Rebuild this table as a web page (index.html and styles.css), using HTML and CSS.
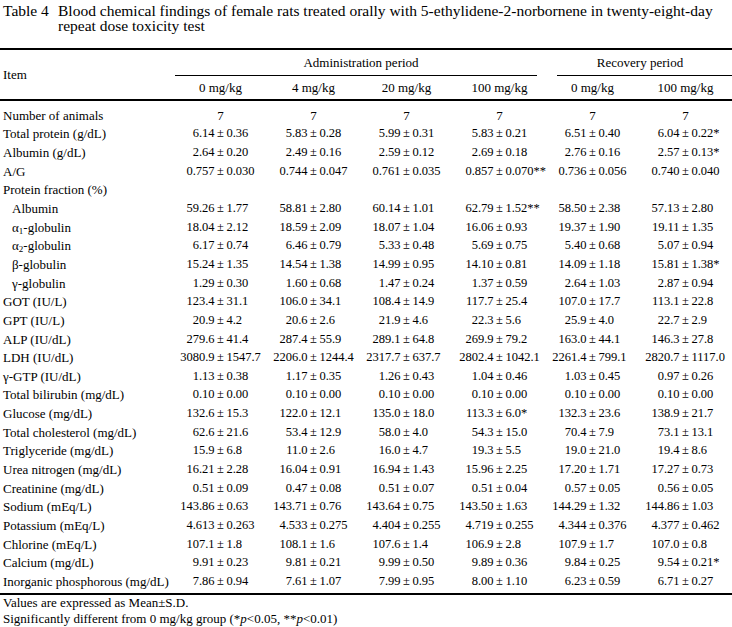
FILE: index.html
```html
<!DOCTYPE html>
<html lang="en">
<head>
<meta charset="utf-8">
<title>Table 4</title>
<link rel="stylesheet" href="styles.css">
</head>
<body>
<div class="page">
  <div class="caption">
    <span class="label">Table 4</span>
    <span class="title">Blood chemical findings of female rats treated orally with 5-ethylidene-2-norbornene in twenty-eight-day repeat dose toxicity test</span>
  </div>

  <div class="table">
    <div class="head">
      <div class="item">Item</div>
      <div class="group admin">Administration period</div>
      <div class="group recovery">Recovery period</div>
      <div class="dose">0 mg/kg</div>
      <div class="dose">4 mg/kg</div>
      <div class="dose">20 mg/kg</div>
      <div class="dose">100 mg/kg</div>
      <div class="dose">0 mg/kg</div>
      <div class="dose">100 mg/kg</div>
    </div>

    <div class="body">
      <div class="row"><div class="lbl">Number of animals</div><div class="n">7</div><div class="n">7</div><div class="n">7</div><div class="n">7</div><div class="n">7</div><div class="n">7</div></div>
      <div class="row"><div class="lbl">Total protein (g/dL)</div><div class="v"><span>6.14</span><span class="pm">±</span><span>0.36</span></div><div class="v"><span>5.83</span><span class="pm">±</span><span>0.28</span></div><div class="v"><span>5.99</span><span class="pm">±</span><span>0.31</span></div><div class="v"><span>5.83</span><span class="pm">±</span><span>0.21</span></div><div class="v"><span>6.51</span><span class="pm">±</span><span>0.40</span></div><div class="v"><span>6.04</span><span class="pm">±</span><span>0.22*</span></div></div>
      <div class="row"><div class="lbl">Albumin (g/dL)</div><div class="v"><span>2.64</span><span class="pm">±</span><span>0.20</span></div><div class="v"><span>2.49</span><span class="pm">±</span><span>0.16</span></div><div class="v"><span>2.59</span><span class="pm">±</span><span>0.12</span></div><div class="v"><span>2.69</span><span class="pm">±</span><span>0.18</span></div><div class="v"><span>2.76</span><span class="pm">±</span><span>0.16</span></div><div class="v"><span>2.57</span><span class="pm">±</span><span>0.13*</span></div></div>
      <div class="row"><div class="lbl">A/G</div><div class="v"><span>0.757</span><span class="pm">±</span><span>0.030</span></div><div class="v"><span>0.744</span><span class="pm">±</span><span>0.047</span></div><div class="v"><span>0.761</span><span class="pm">±</span><span>0.035</span></div><div class="v"><span>0.857</span><span class="pm">±</span><span>0.070**</span></div><div class="v"><span>0.736</span><span class="pm">±</span><span>0.056</span></div><div class="v"><span>0.740</span><span class="pm">±</span><span>0.040</span></div></div>
      <div class="row"><div class="lbl">Protein fraction (%)</div></div>
      <div class="row"><div class="lbl sub">Albumin</div><div class="v"><span>59.26</span><span class="pm">±</span><span>1.77</span></div><div class="v"><span>58.81</span><span class="pm">±</span><span>2.80</span></div><div class="v"><span>60.14</span><span class="pm">±</span><span>1.01</span></div><div class="v"><span>62.79</span><span class="pm">±</span><span>1.52**</span></div><div class="v"><span>58.50</span><span class="pm">±</span><span>2.38</span></div><div class="v"><span>57.13</span><span class="pm">±</span><span>2.80</span></div></div>
      <div class="row"><div class="lbl sub">α<sub>1</sub>-globulin</div><div class="v"><span>18.04</span><span class="pm">±</span><span>2.12</span></div><div class="v"><span>18.59</span><span class="pm">±</span><span>2.09</span></div><div class="v"><span>18.07</span><span class="pm">±</span><span>1.04</span></div><div class="v"><span>16.06</span><span class="pm">±</span><span>0.93</span></div><div class="v"><span>19.37</span><span class="pm">±</span><span>1.90</span></div><div class="v"><span>19.11</span><span class="pm">±</span><span>1.35</span></div></div>
      <div class="row"><div class="lbl sub">α<sub>2</sub>-globulin</div><div class="v"><span>6.17</span><span class="pm">±</span><span>0.74</span></div><div class="v"><span>6.46</span><span class="pm">±</span><span>0.79</span></div><div class="v"><span>5.33</span><span class="pm">±</span><span>0.48</span></div><div class="v"><span>5.69</span><span class="pm">±</span><span>0.75</span></div><div class="v"><span>5.40</span><span class="pm">±</span><span>0.68</span></div><div class="v"><span>5.07</span><span class="pm">±</span><span>0.94</span></div></div>
      <div class="row"><div class="lbl sub">β-globulin</div><div class="v"><span>15.24</span><span class="pm">±</span><span>1.35</span></div><div class="v"><span>14.54</span><span class="pm">±</span><span>1.38</span></div><div class="v"><span>14.99</span><span class="pm">±</span><span>0.95</span></div><div class="v"><span>14.10</span><span class="pm">±</span><span>0.81</span></div><div class="v"><span>14.09</span><span class="pm">±</span><span>1.18</span></div><div class="v"><span>15.81</span><span class="pm">±</span><span>1.38*</span></div></div>
      <div class="row"><div class="lbl sub">γ-globulin</div><div class="v"><span>1.29</span><span class="pm">±</span><span>0.30</span></div><div class="v"><span>1.60</span><span class="pm">±</span><span>0.68</span></div><div class="v"><span>1.47</span><span class="pm">±</span><span>0.24</span></div><div class="v"><span>1.37</span><span class="pm">±</span><span>0.59</span></div><div class="v"><span>2.64</span><span class="pm">±</span><span>1.03</span></div><div class="v"><span>2.87</span><span class="pm">±</span><span>0.94</span></div></div>
      <div class="row"><div class="lbl">GOT (IU/L)</div><div class="v"><span>123.4</span><span class="pm">±</span><span>31.1</span></div><div class="v"><span>106.0</span><span class="pm">±</span><span>34.1</span></div><div class="v"><span>108.4</span><span class="pm">±</span><span>14.9</span></div><div class="v"><span>117.7</span><span class="pm">±</span><span>25.4</span></div><div class="v"><span>107.0</span><span class="pm">±</span><span>17.7</span></div><div class="v"><span>113.1</span><span class="pm">±</span><span>22.8</span></div></div>
      <div class="row"><div class="lbl">GPT (IU/L)</div><div class="v"><span>20.9</span><span class="pm">±</span><span>4.2</span></div><div class="v"><span>20.6</span><span class="pm">±</span><span>2.6</span></div><div class="v"><span>21.9</span><span class="pm">±</span><span>4.6</span></div><div class="v"><span>22.3</span><span class="pm">±</span><span>5.6</span></div><div class="v"><span>25.9</span><span class="pm">±</span><span>4.0</span></div><div class="v"><span>22.7</span><span class="pm">±</span><span>2.9</span></div></div>
      <div class="row"><div class="lbl">ALP (IU/dL)</div><div class="v"><span>279.6</span><span class="pm">±</span><span>41.4</span></div><div class="v"><span>287.4</span><span class="pm">±</span><span>55.9</span></div><div class="v"><span>289.1</span><span class="pm">±</span><span>64.8</span></div><div class="v"><span>269.9</span><span class="pm">±</span><span>79.2</span></div><div class="v"><span>163.0</span><span class="pm">±</span><span>44.1</span></div><div class="v"><span>146.3</span><span class="pm">±</span><span>27.8</span></div></div>
      <div class="row"><div class="lbl">LDH (IU/dL)</div><div class="v"><span>3080.9</span><span class="pm">±</span><span>1547.7</span></div><div class="v"><span>2206.0</span><span class="pm">±</span><span>1244.4</span></div><div class="v"><span>2317.7</span><span class="pm">±</span><span>637.7</span></div><div class="v"><span>2802.4</span><span class="pm">±</span><span>1042.1</span></div><div class="v"><span>2261.4</span><span class="pm">±</span><span>799.1</span></div><div class="v"><span>2820.7</span><span class="pm">±</span><span>1117.0</span></div></div>
      <div class="row"><div class="lbl">γ-GTP (IU/dL)</div><div class="v"><span>1.13</span><span class="pm">±</span><span>0.38</span></div><div class="v"><span>1.17</span><span class="pm">±</span><span>0.35</span></div><div class="v"><span>1.26</span><span class="pm">±</span><span>0.43</span></div><div class="v"><span>1.04</span><span class="pm">±</span><span>0.46</span></div><div class="v"><span>1.03</span><span class="pm">±</span><span>0.45</span></div><div class="v"><span>0.97</span><span class="pm">±</span><span>0.26</span></div></div>
      <div class="row"><div class="lbl">Total bilirubin (mg/dL)</div><div class="v"><span>0.10</span><span class="pm">±</span><span>0.00</span></div><div class="v"><span>0.10</span><span class="pm">±</span><span>0.00</span></div><div class="v"><span>0.10</span><span class="pm">±</span><span>0.00</span></div><div class="v"><span>0.10</span><span class="pm">±</span><span>0.00</span></div><div class="v"><span>0.10</span><span class="pm">±</span><span>0.00</span></div><div class="v"><span>0.10</span><span class="pm">±</span><span>0.00</span></div></div>
      <div class="row"><div class="lbl">Glucose (mg/dL)</div><div class="v"><span>132.6</span><span class="pm">±</span><span>15.3</span></div><div class="v"><span>122.0</span><span class="pm">±</span><span>12.1</span></div><div class="v"><span>135.0</span><span class="pm">±</span><span>18.0</span></div><div class="v"><span>113.3</span><span class="pm">±</span><span>6.0*</span></div><div class="v"><span>132.3</span><span class="pm">±</span><span>23.6</span></div><div class="v"><span>138.9</span><span class="pm">±</span><span>21.7</span></div></div>
      <div class="row"><div class="lbl">Total cholesterol (mg/dL)</div><div class="v"><span>62.6</span><span class="pm">±</span><span>21.6</span></div><div class="v"><span>53.4</span><span class="pm">±</span><span>12.9</span></div><div class="v"><span>58.0</span><span class="pm">±</span><span>4.0</span></div><div class="v"><span>54.3</span><span class="pm">±</span><span>15.0</span></div><div class="v"><span>70.4</span><span class="pm">±</span><span>7.9</span></div><div class="v"><span>73.1</span><span class="pm">±</span><span>13.1</span></div></div>
      <div class="row"><div class="lbl">Triglyceride (mg/dL)</div><div class="v"><span>15.9</span><span class="pm">±</span><span>6.8</span></div><div class="v"><span>11.0</span><span class="pm">±</span><span>2.6</span></div><div class="v"><span>16.0</span><span class="pm">±</span><span>4.7</span></div><div class="v"><span>19.3</span><span class="pm">±</span><span>5.5</span></div><div class="v"><span>19.0</span><span class="pm">±</span><span>21.0</span></div><div class="v"><span>19.4</span><span class="pm">±</span><span>8.6</span></div></div>
      <div class="row"><div class="lbl">Urea nitrogen (mg/dL)</div><div class="v"><span>16.21</span><span class="pm">±</span><span>2.28</span></div><div class="v"><span>16.04</span><span class="pm">±</span><span>0.91</span></div><div class="v"><span>16.94</span><span class="pm">±</span><span>1.43</span></div><div class="v"><span>15.96</span><span class="pm">±</span><span>2.25</span></div><div class="v"><span>17.20</span><span class="pm">±</span><span>1.71</span></div><div class="v"><span>17.27</span><span class="pm">±</span><span>0.73</span></div></div>
      <div class="row"><div class="lbl">Creatinine (mg/dL)</div><div class="v"><span>0.51</span><span class="pm">±</span><span>0.09</span></div><div class="v"><span>0.47</span><span class="pm">±</span><span>0.08</span></div><div class="v"><span>0.51</span><span class="pm">±</span><span>0.07</span></div><div class="v"><span>0.51</span><span class="pm">±</span><span>0.04</span></div><div class="v"><span>0.57</span><span class="pm">±</span><span>0.05</span></div><div class="v"><span>0.56</span><span class="pm">±</span><span>0.05</span></div></div>
      <div class="row"><div class="lbl">Sodium (mEq/L)</div><div class="v"><span>143.86</span><span class="pm">±</span><span>0.63</span></div><div class="v"><span>143.71</span><span class="pm">±</span><span>0.76</span></div><div class="v"><span>143.64</span><span class="pm">±</span><span>0.75</span></div><div class="v"><span>143.50</span><span class="pm">±</span><span>1.63</span></div><div class="v"><span>144.29</span><span class="pm">±</span><span>1.32</span></div><div class="v"><span>144.86</span><span class="pm">±</span><span>1.03</span></div></div>
      <div class="row"><div class="lbl">Potassium (mEq/L)</div><div class="v"><span>4.613</span><span class="pm">±</span><span>0.263</span></div><div class="v"><span>4.533</span><span class="pm">±</span><span>0.275</span></div><div class="v"><span>4.404</span><span class="pm">±</span><span>0.255</span></div><div class="v"><span>4.719</span><span class="pm">±</span><span>0.255</span></div><div class="v"><span>4.344</span><span class="pm">±</span><span>0.376</span></div><div class="v"><span>4.377</span><span class="pm">±</span><span>0.462</span></div></div>
      <div class="row"><div class="lbl">Chlorine (mEq/L)</div><div class="v"><span>107.1</span><span class="pm">±</span><span>1.8</span></div><div class="v"><span>108.1</span><span class="pm">±</span><span>1.6</span></div><div class="v"><span>107.6</span><span class="pm">±</span><span>1.4</span></div><div class="v"><span>106.9</span><span class="pm">±</span><span>2.8</span></div><div class="v"><span>107.9</span><span class="pm">±</span><span>1.7</span></div><div class="v"><span>107.0</span><span class="pm">±</span><span>0.8</span></div></div>
      <div class="row"><div class="lbl">Calcium (mg/dL)</div><div class="v"><span>9.91</span><span class="pm">±</span><span>0.23</span></div><div class="v"><span>9.81</span><span class="pm">±</span><span>0.21</span></div><div class="v"><span>9.99</span><span class="pm">±</span><span>0.50</span></div><div class="v"><span>9.89</span><span class="pm">±</span><span>0.36</span></div><div class="v"><span>9.84</span><span class="pm">±</span><span>0.25</span></div><div class="v"><span>9.54</span><span class="pm">±</span><span>0.21*</span></div></div>
      <div class="row"><div class="lbl">Inorganic phosphorous (mg/dL)</div><div class="v"><span>7.86</span><span class="pm">±</span><span>0.94</span></div><div class="v"><span>7.61</span><span class="pm">±</span><span>1.07</span></div><div class="v"><span>7.99</span><span class="pm">±</span><span>0.95</span></div><div class="v"><span>8.00</span><span class="pm">±</span><span>1.10</span></div><div class="v"><span>6.23</span><span class="pm">±</span><span>0.59</span></div><div class="v"><span>6.71</span><span class="pm">±</span><span>0.27</span></div></div>
    </div>
  </div>

  <div class="notes">
    <p>Values are expressed as Mean±S.D.</p>
    <p>Significantly different from 0 mg/kg group (*<i>p</i>&lt;0.05, **<i>p</i>&lt;0.01)</p>
  </div>
</div>
</body>
</html>
```

FILE: styles.css
```css
* {
  box-sizing: border-box;
}

html, body {
  margin: 0;
  padding: 0;
  background: #fff;
}

body {
  color: #000;
  font-family: "Liberation Serif", "Times New Roman", serif;
  font-size: 13px;
  line-height: 15px;
}

.page {
  width: 732px;
}

/* caption */
.caption {
  display: flex;
  padding: 3px 0 0 3px;
  font-size: 15.5px;
  line-height: 15px;
}

.caption .label {
  flex: 0 0 55px;
}

.caption .title {
  flex: 1;
  padding-right: 10px;
}

/* table */
.table {
  margin-top: 15px;
  border-top: 2px solid #000;
}

.head {
  display: grid;
  grid-template-columns: 174px repeat(6, 93px);
  grid-template-rows: 26px 23px;
  border-bottom: 2px solid #000;
}

.item {
  grid-row: 1 / 3;
  grid-column: 1;
  display: flex;
  align-items: center;
  padding-left: 3px;
}

.group {
  display: flex;
  align-items: center;
  justify-content: center;
  border-bottom: 1px solid #000;
}

.group.admin {
  grid-column: 2 / 6;
  margin: 0 9px 0 1px;
  padding-left: 10px;
}

.group.recovery {
  grid-column: 6 / 8;
  margin-left: 11px;
  padding-right: 9px;
}

.dose {
  grid-row: 2;
  display: flex;
  align-items: center;
  justify-content: center;
}

.body {
  padding: 5px 0 2px;
  border-bottom: 2px solid #000;
}

.row {
  display: grid;
  grid-template-columns: 174px repeat(6, 93px);
  height: 18.65px;
  align-items: center;
}

.lbl {
  padding-left: 3px;
  white-space: nowrap;
}

.lbl.sub {
  padding-left: 12px;
}

.lbl sub {
  font-size: 9px;
  line-height: 0;
  vertical-align: -2px;
}

.n {
  text-align: center;
}

.v {
  display: grid;
  grid-template-columns: 1fr auto 1fr;
  white-space: nowrap;
  font-size: 12.5px;
}

.v > span:first-child {
  text-align: right;
}

.v > span:last-child {
  text-align: left;
}

.pm {
  padding: 0 2.5px;
}

/* notes */
.notes {
  padding-left: 3px;
  line-height: 16px;
}

.notes p {
  margin: 0;
}
```
